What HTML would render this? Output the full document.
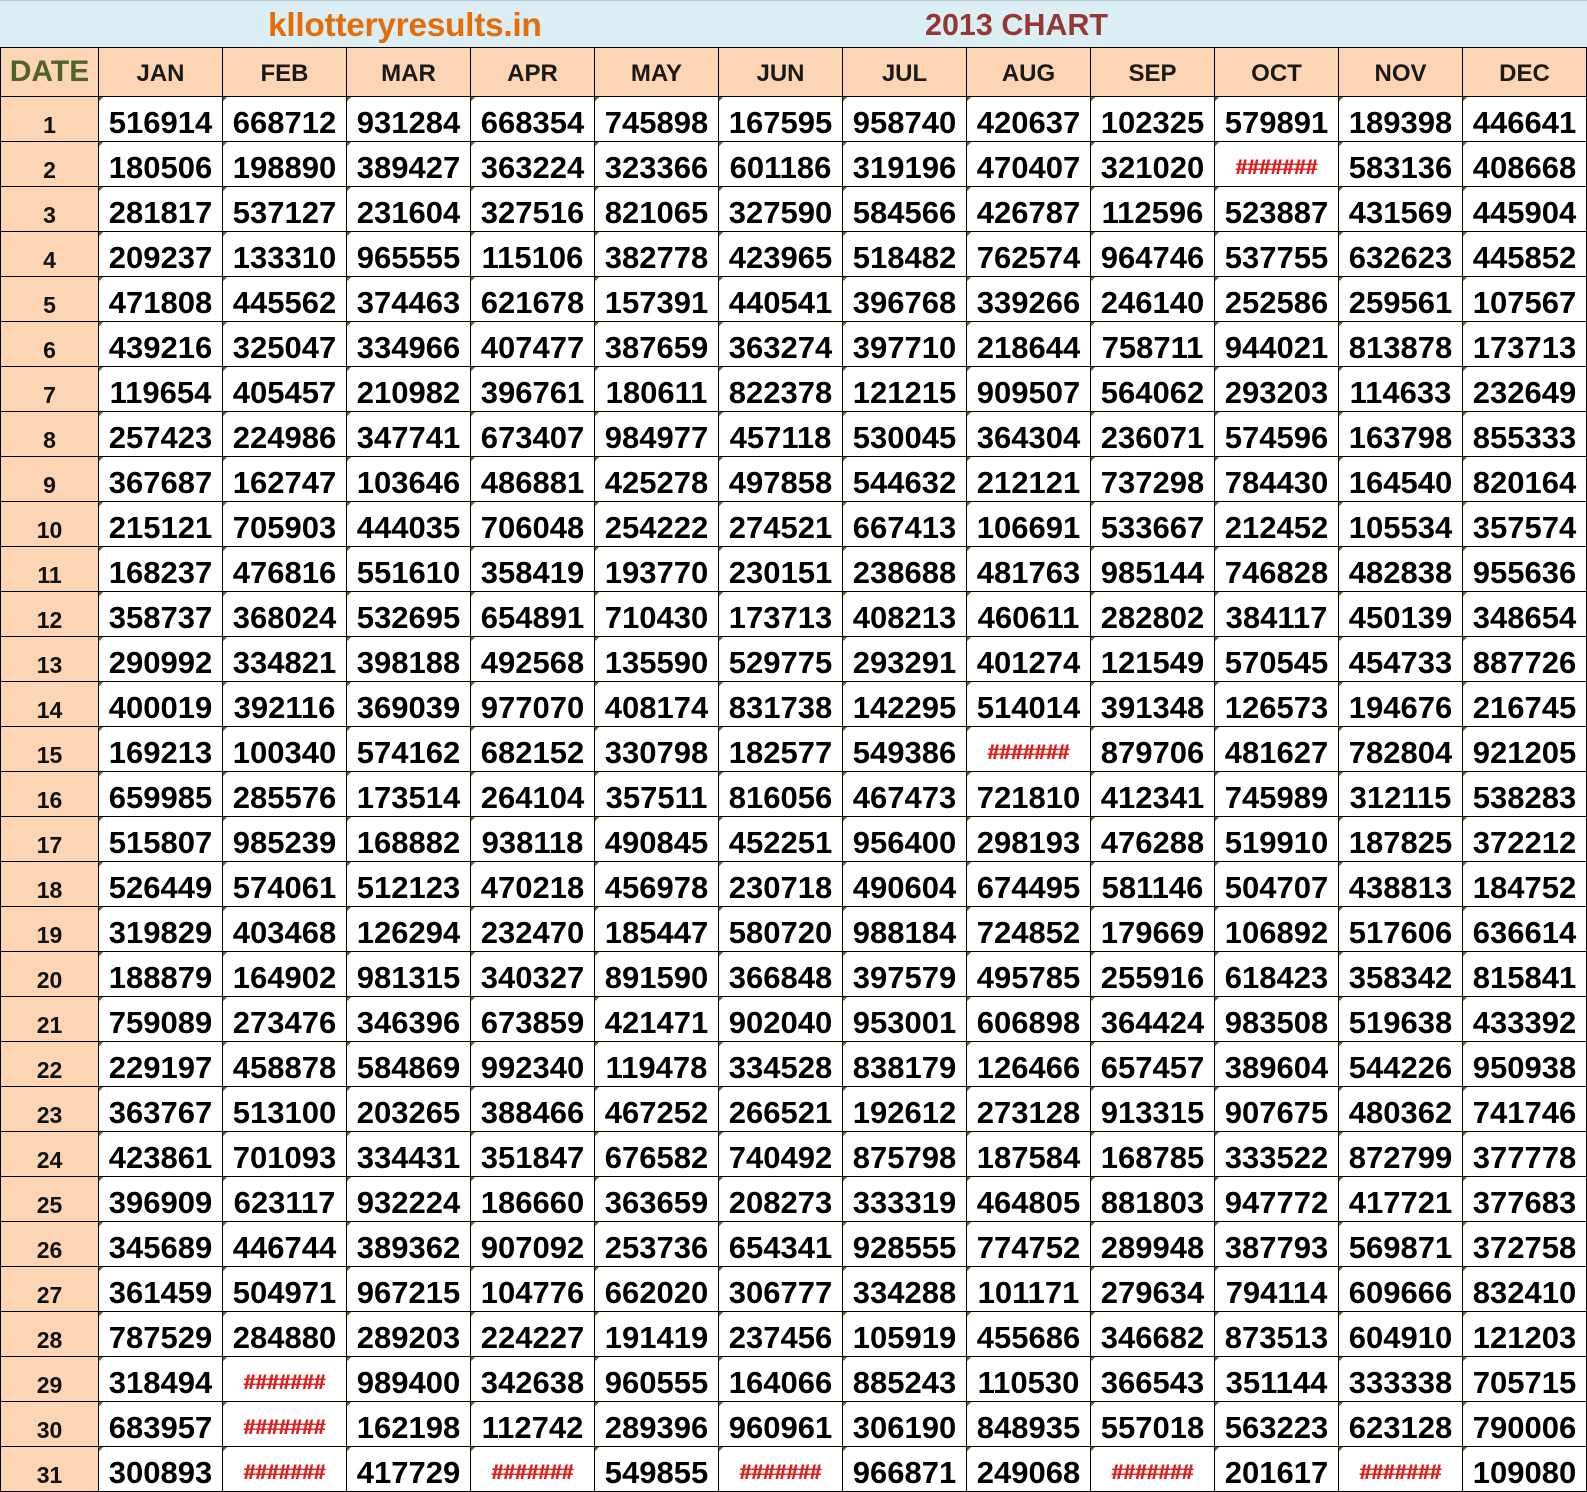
<!DOCTYPE html>
<html><head><meta charset="utf-8">
<style>
*{margin:0;padding:0;box-sizing:border-box}
html,body{width:1587px;height:1492px;overflow:hidden;background:#fff;font-family:"Liberation Sans",sans-serif;font-weight:bold}
#title{position:absolute;left:0;top:0;width:1587px;height:48px;background:#dbeef4;border-top:1px solid #b8c8d0}
#t1{position:absolute;left:268px;top:6px;font-size:33.5px;color:#e46c0a;letter-spacing:-0.3px}
#t2{position:absolute;left:925px;top:7px;font-size:30.5px;color:#953735}
#g{position:absolute;left:0;top:47px;width:1587px;height:1445px;background:#000;display:grid;padding:1px;gap:1px;grid-template-columns:97px repeat(12,123px);grid-template-rows:48px repeat(31,44px)}
#g div{text-align:center;white-space:nowrap;overflow:hidden;font-size:31px;color:#000;padding-top:7px;line-height:38px;background:linear-gradient(135deg,#4a7a2a 0,#4a7a2a 3px,#fff 3px)}
#g div.h{background:#fcd5b4;font-size:24px;color:#1a1a1a;padding-top:6px;line-height:40px}
#g div.hd{background:#fcd5b4;font-size:30px;color:#4f6228;padding-top:4px;line-height:40px}
#g div.d{background:#fcd5b4;font-size:23px;color:#111;padding-top:9px;line-height:38px}
#g div.x{color:#e02020;font-size:21px;text-shadow:0.6px 0 0 #e02020,-0.3px 0 0 #e02020}
</style></head><body>
<div id="title"><span id="t1">kllotteryresults.in</span><span id="t2">2013 CHART</span></div>
<div id="g">
<div class="hd">DATE</div><div class="h">JAN</div><div class="h">FEB</div><div class="h">MAR</div><div class="h">APR</div><div class="h">MAY</div><div class="h">JUN</div><div class="h">JUL</div><div class="h">AUG</div><div class="h">SEP</div><div class="h">OCT</div><div class="h">NOV</div><div class="h">DEC</div>
<div class="d">1</div><div>516914</div><div>668712</div><div>931284</div><div>668354</div><div>745898</div><div>167595</div><div>958740</div><div>420637</div><div>102325</div><div>579891</div><div>189398</div><div>446641</div>
<div class="d">2</div><div>180506</div><div>198890</div><div>389427</div><div>363224</div><div>323366</div><div>601186</div><div>319196</div><div>470407</div><div>321020</div><div class="x">#######</div><div>583136</div><div>408668</div>
<div class="d">3</div><div>281817</div><div>537127</div><div>231604</div><div>327516</div><div>821065</div><div>327590</div><div>584566</div><div>426787</div><div>112596</div><div>523887</div><div>431569</div><div>445904</div>
<div class="d">4</div><div>209237</div><div>133310</div><div>965555</div><div>115106</div><div>382778</div><div>423965</div><div>518482</div><div>762574</div><div>964746</div><div>537755</div><div>632623</div><div>445852</div>
<div class="d">5</div><div>471808</div><div>445562</div><div>374463</div><div>621678</div><div>157391</div><div>440541</div><div>396768</div><div>339266</div><div>246140</div><div>252586</div><div>259561</div><div>107567</div>
<div class="d">6</div><div>439216</div><div>325047</div><div>334966</div><div>407477</div><div>387659</div><div>363274</div><div>397710</div><div>218644</div><div>758711</div><div>944021</div><div>813878</div><div>173713</div>
<div class="d">7</div><div>119654</div><div>405457</div><div>210982</div><div>396761</div><div>180611</div><div>822378</div><div>121215</div><div>909507</div><div>564062</div><div>293203</div><div>114633</div><div>232649</div>
<div class="d">8</div><div>257423</div><div>224986</div><div>347741</div><div>673407</div><div>984977</div><div>457118</div><div>530045</div><div>364304</div><div>236071</div><div>574596</div><div>163798</div><div>855333</div>
<div class="d">9</div><div>367687</div><div>162747</div><div>103646</div><div>486881</div><div>425278</div><div>497858</div><div>544632</div><div>212121</div><div>737298</div><div>784430</div><div>164540</div><div>820164</div>
<div class="d">10</div><div>215121</div><div>705903</div><div>444035</div><div>706048</div><div>254222</div><div>274521</div><div>667413</div><div>106691</div><div>533667</div><div>212452</div><div>105534</div><div>357574</div>
<div class="d">11</div><div>168237</div><div>476816</div><div>551610</div><div>358419</div><div>193770</div><div>230151</div><div>238688</div><div>481763</div><div>985144</div><div>746828</div><div>482838</div><div>955636</div>
<div class="d">12</div><div>358737</div><div>368024</div><div>532695</div><div>654891</div><div>710430</div><div>173713</div><div>408213</div><div>460611</div><div>282802</div><div>384117</div><div>450139</div><div>348654</div>
<div class="d">13</div><div>290992</div><div>334821</div><div>398188</div><div>492568</div><div>135590</div><div>529775</div><div>293291</div><div>401274</div><div>121549</div><div>570545</div><div>454733</div><div>887726</div>
<div class="d">14</div><div>400019</div><div>392116</div><div>369039</div><div>977070</div><div>408174</div><div>831738</div><div>142295</div><div>514014</div><div>391348</div><div>126573</div><div>194676</div><div>216745</div>
<div class="d">15</div><div>169213</div><div>100340</div><div>574162</div><div>682152</div><div>330798</div><div>182577</div><div>549386</div><div class="x">#######</div><div>879706</div><div>481627</div><div>782804</div><div>921205</div>
<div class="d">16</div><div>659985</div><div>285576</div><div>173514</div><div>264104</div><div>357511</div><div>816056</div><div>467473</div><div>721810</div><div>412341</div><div>745989</div><div>312115</div><div>538283</div>
<div class="d">17</div><div>515807</div><div>985239</div><div>168882</div><div>938118</div><div>490845</div><div>452251</div><div>956400</div><div>298193</div><div>476288</div><div>519910</div><div>187825</div><div>372212</div>
<div class="d">18</div><div>526449</div><div>574061</div><div>512123</div><div>470218</div><div>456978</div><div>230718</div><div>490604</div><div>674495</div><div>581146</div><div>504707</div><div>438813</div><div>184752</div>
<div class="d">19</div><div>319829</div><div>403468</div><div>126294</div><div>232470</div><div>185447</div><div>580720</div><div>988184</div><div>724852</div><div>179669</div><div>106892</div><div>517606</div><div>636614</div>
<div class="d">20</div><div>188879</div><div>164902</div><div>981315</div><div>340327</div><div>891590</div><div>366848</div><div>397579</div><div>495785</div><div>255916</div><div>618423</div><div>358342</div><div>815841</div>
<div class="d">21</div><div>759089</div><div>273476</div><div>346396</div><div>673859</div><div>421471</div><div>902040</div><div>953001</div><div>606898</div><div>364424</div><div>983508</div><div>519638</div><div>433392</div>
<div class="d">22</div><div>229197</div><div>458878</div><div>584869</div><div>992340</div><div>119478</div><div>334528</div><div>838179</div><div>126466</div><div>657457</div><div>389604</div><div>544226</div><div>950938</div>
<div class="d">23</div><div>363767</div><div>513100</div><div>203265</div><div>388466</div><div>467252</div><div>266521</div><div>192612</div><div>273128</div><div>913315</div><div>907675</div><div>480362</div><div>741746</div>
<div class="d">24</div><div>423861</div><div>701093</div><div>334431</div><div>351847</div><div>676582</div><div>740492</div><div>875798</div><div>187584</div><div>168785</div><div>333522</div><div>872799</div><div>377778</div>
<div class="d">25</div><div>396909</div><div>623117</div><div>932224</div><div>186660</div><div>363659</div><div>208273</div><div>333319</div><div>464805</div><div>881803</div><div>947772</div><div>417721</div><div>377683</div>
<div class="d">26</div><div>345689</div><div>446744</div><div>389362</div><div>907092</div><div>253736</div><div>654341</div><div>928555</div><div>774752</div><div>289948</div><div>387793</div><div>569871</div><div>372758</div>
<div class="d">27</div><div>361459</div><div>504971</div><div>967215</div><div>104776</div><div>662020</div><div>306777</div><div>334288</div><div>101171</div><div>279634</div><div>794114</div><div>609666</div><div>832410</div>
<div class="d">28</div><div>787529</div><div>284880</div><div>289203</div><div>224227</div><div>191419</div><div>237456</div><div>105919</div><div>455686</div><div>346682</div><div>873513</div><div>604910</div><div>121203</div>
<div class="d">29</div><div>318494</div><div class="x">#######</div><div>989400</div><div>342638</div><div>960555</div><div>164066</div><div>885243</div><div>110530</div><div>366543</div><div>351144</div><div>333338</div><div>705715</div>
<div class="d">30</div><div>683957</div><div class="x">#######</div><div>162198</div><div>112742</div><div>289396</div><div>960961</div><div>306190</div><div>848935</div><div>557018</div><div>563223</div><div>623128</div><div>790006</div>
<div class="d">31</div><div>300893</div><div class="x">#######</div><div>417729</div><div class="x">#######</div><div>549855</div><div class="x">#######</div><div>966871</div><div>249068</div><div class="x">#######</div><div>201617</div><div class="x">#######</div><div>109080</div>
</div>
</body></html>
